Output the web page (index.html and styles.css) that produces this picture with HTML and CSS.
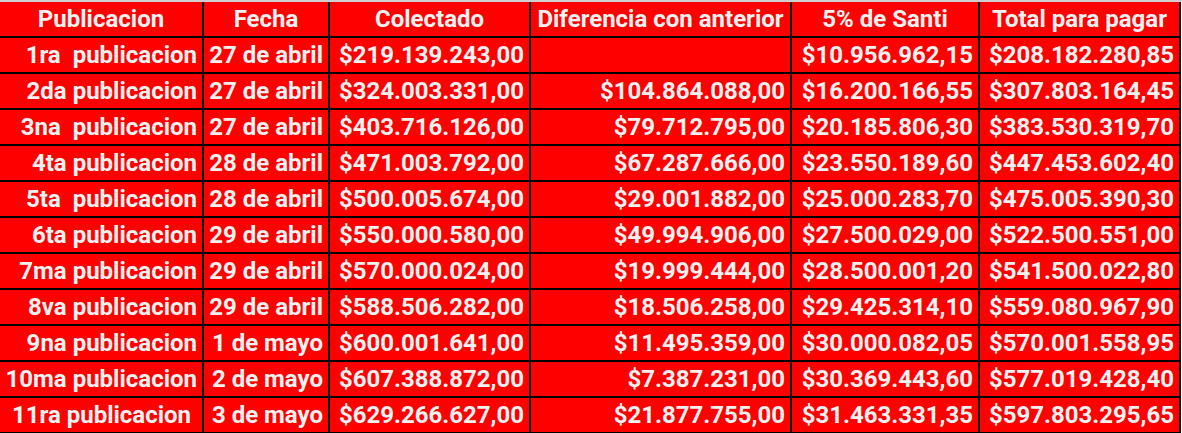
FILE: index.html
```html
<!DOCTYPE html>
<html lang="es">
<head>
<meta charset="utf-8">
<title>Publicaciones</title>
<link rel="stylesheet" href="styles.css">
</head>
<body>
<div class="sheet">
<table class="grid">
<colgroup>
<col class="c1"><col class="c2"><col class="c3"><col class="c4"><col class="c5"><col class="c6">
</colgroup>
<thead>
<tr><th>Publicacion</th><th>Fecha</th><th>Colectado</th><th>Diferencia con anterior</th><th>5% de Santi</th><th>Total para pagar</th></tr>
</thead>
<tbody>
<tr><td>1ra  publicacion</td><td>27 de abril</td><td>$219.139.243,00</td><td></td><td>$10.956.962,15</td><td>$208.182.280,85</td></tr>
<tr><td>2da publicacion</td><td>27 de abril</td><td>$324.003.331,00</td><td>$104.864.088,00</td><td>$16.200.166,55</td><td>$307.803.164,45</td></tr>
<tr><td>3na  publicacion</td><td>27 de abril</td><td>$403.716.126,00</td><td>$79.712.795,00</td><td>$20.185.806,30</td><td>$383.530.319,70</td></tr>
<tr><td>4ta publicacion</td><td>28 de abril</td><td>$471.003.792,00</td><td>$67.287.666,00</td><td>$23.550.189,60</td><td>$447.453.602,40</td></tr>
<tr><td>5ta  publicacion</td><td>28 de abril</td><td>$500.005.674,00</td><td>$29.001.882,00</td><td>$25.000.283,70</td><td>$475.005.390,30</td></tr>
<tr><td>6ta publicacion</td><td>29 de abril</td><td>$550.000.580,00</td><td>$49.994.906,00</td><td>$27.500.029,00</td><td>$522.500.551,00</td></tr>
<tr><td>7ma publicacion</td><td>29 de abril</td><td>$570.000.024,00</td><td>$19.999.444,00</td><td>$28.500.001,20</td><td>$541.500.022,80</td></tr>
<tr><td>8va publicacion</td><td>29 de abril</td><td>$588.506.282,00</td><td>$18.506.258,00</td><td>$29.425.314,10</td><td>$559.080.967,90</td></tr>
<tr><td>9na publicacion</td><td>1 de mayo</td><td>$600.001.641,00</td><td>$11.495.359,00</td><td>$30.000.082,05</td><td>$570.001.558,95</td></tr>
<tr><td>10ma publicacion</td><td>2 de mayo</td><td>$607.388.872,00</td><td>$7.387.231,00</td><td>$30.369.443,60</td><td>$577.019.428,40</td></tr>
<tr><td>11ra publicacion </td><td>3 de mayo</td><td>$629.266.627,00</td><td>$21.877.755,00</td><td>$31.463.331,35</td><td>$597.803.295,65</td></tr>
</tbody>
</table>
</div>
</body>
</html>
```

FILE: styles.css
```css
html, body {
  margin: 0;
  padding: 0;
  background: #ffffff;
}
.sheet {
  width: 1182px;
  height: 433px;
  overflow: hidden;
  border-top: 2px solid #cfcfcf;
  box-sizing: border-box;
}
.grid {
  border-collapse: separate;
  border-spacing: 0;
  table-layout: fixed;
  width: 1181px;
  font-family: Roboto, "Liberation Sans", sans-serif;
  font-weight: 700;
  font-size: 24px;
  color: #f2f2f2;
  background: #ff0000;
}
.c1 { width: 204px; }
.c2 { width: 126px; }
.c3 { width: 201px; }
.c4 { width: 261px; }
.c5 { width: 188px; }
.c6 { width: 201px; }
.grid th, .grid td {
  height: 34px;
  padding: 0 5px 0 0;
  border-right: 2px solid #000;
  border-bottom: 2px solid #000;
  white-space: pre;
  overflow: hidden;
  text-align: right;
  line-height: 34px;
  box-sizing: content-box;
}
.grid th {
  text-align: center;
  padding: 0;
}
```
